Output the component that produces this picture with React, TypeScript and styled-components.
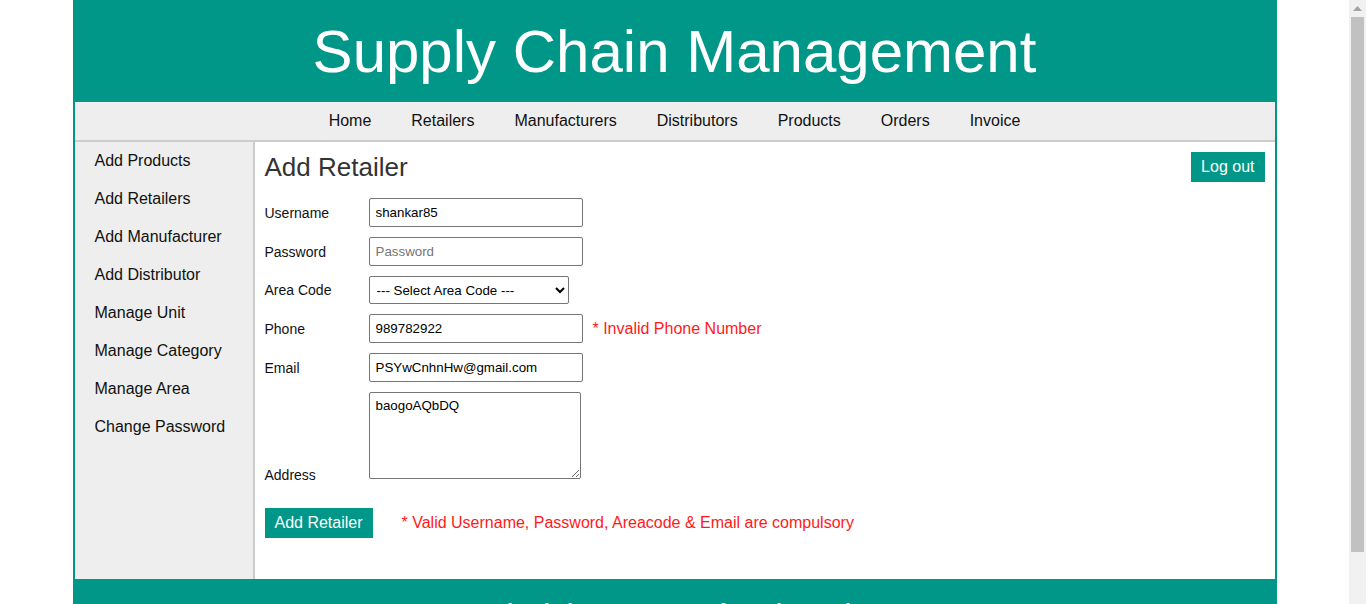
import React from "react";
import styled, { createGlobalStyle } from "styled-components";

const TEAL = "#009688";

const GlobalStyle = createGlobalStyle`
  body {
    margin: 0;
    padding-right: 17px;
    background: #fff;
    font-family: "Liberation Sans", Arial, sans-serif;
    color: #111;
  }
  * { box-sizing: border-box; }
`;

// drawn stand-in for the browser's vertical scrollbar seen in the screenshot
const ScrollTrack = styled.div`
  position: fixed;
  top: 0;
  right: 0;
  width: 17px;
  height: 100vh;
  background: #f1f1f1;
  display: flex;
  flex-direction: column;
  align-items: center;
`;

const ScrollArrow = styled.div`
  height: 17px;
  display: flex;
  align-items: center;
  justify-content: center;
`;

const ScrollThumb = styled.div`
  width: 13px;
  height: 535px;
  background: #c1c1c1;
`;

const Page = styled.div`
  width: 1204px;
  margin: 0 auto;
  border-left: 2px solid ${TEAL};
  border-right: 2px solid ${TEAL};
`;

const Header = styled.header`
  height: 102px;
  background: ${TEAL};
  display: flex;
  align-items: center;
  justify-content: center;
`;

const Title = styled.h1`
  margin: 0;
  font-size: 60px;
  font-weight: normal;
  line-height: 69px;
  color: #fff;
`;

const Nav = styled.nav`
  height: 40px;
  background: #eee;
  border-bottom: 2px solid #ccc;
  display: flex;
  align-items: center;
  justify-content: center;
`;

const NavLink = styled.a`
  padding: 0 20px;
  font-size: 16px;
  color: #111;
  text-decoration: none;
  cursor: pointer;
`;

const Body = styled.div`
  display: flex;
  height: 437px;
`;

const Sidebar = styled.aside`
  width: 180px;
  background: #eee;
  border-right: 2px solid #ccc;
  padding: 0 20px;
`;

const SideLink = styled.a`
  display: block;
  line-height: 38px;
  font-size: 16px;
  color: #111;
  text-decoration: none;
  cursor: pointer;
`;

const Main = styled.main`
  flex: 1;
  padding: 10px;
`;

const TopRow = styled.div`
  display: flex;
  align-items: center;
  justify-content: space-between;
  height: 30px;
  margin-bottom: 16px;
`;

const Heading = styled.h2`
  margin: 0;
  font-size: 26px;
  font-weight: normal;
  color: #333;
`;

const TealButton = styled.button`
  height: 30px;
  padding: 0 10px;
  background: ${TEAL};
  color: #fff;
  border: none;
  font-family: inherit;
  font-size: 16px;
  cursor: pointer;
`;

const Form = styled.form`
  display: flex;
  flex-direction: column;
  gap: 10px;
`;

const Row = styled.div<{ $bottom?: boolean }>`
  display: flex;
  align-items: ${({ $bottom }) => ($bottom ? "flex-end" : "center")};
`;

const Label = styled.label<{ $bottom?: boolean }>`
  width: 104px;
  font-size: 14px;
  color: #111;
  margin-bottom: ${({ $bottom }) => ($bottom ? "-4px" : "0")};
`;

const Input = styled.input`
  width: 214px;
  height: 29px;
  padding: 0 6px;
  border: 1px solid #767676;
  border-radius: 2px;
  font-family: inherit;
  font-size: 13.33px;
  color: #000;
  &::placeholder { color: #757575; }
`;

const Select = styled.select`
  width: 200px;
  height: 28px;
  padding: 0 3px;
  border: 1px solid #767676;
  border-radius: 2px;
  background: #fff;
  font-family: inherit;
  font-size: 13.33px;
  color: #000;
`;

const TextArea = styled.textarea`
  width: 212px;
  height: 87px;
  padding: 5px 6px;
  border: 1px solid #767676;
  border-radius: 2px;
  font-family: inherit;
  font-size: 13.33px;
  color: #000;
  resize: both;
`;

const Error = styled.span<{ $gap: number }>`
  margin-left: ${({ $gap }) => $gap}px;
  font-size: 16px;
  color: #ff1a1a;
`;

const SubmitRow = styled.div`
  display: flex;
  align-items: center;
  margin-top: 19px;
`;

const Footer = styled.footer`
  background: ${TEAL};
  padding: 21px 0 20px;
  text-align: center;
  color: #fff;
  font-weight: bold;
  font-size: 20px;
`;

const navItems = ["Home", "Retailers", "Manufacturers", "Distributors", "Products", "Orders", "Invoice"];
const sideItems = [
  "Add Products",
  "Add Retailers",
  "Add Manufacturer",
  "Add Distributor",
  "Manage Unit",
  "Manage Category",
  "Manage Area",
  "Change Password",
];

export default function App() {
  return (
    <>
      <GlobalStyle />
      <Page>
        <Header>
          <Title>Supply Chain Management</Title>
        </Header>
        <Nav>
          {navItems.map((n) => (
            <NavLink key={n}>{n}</NavLink>
          ))}
        </Nav>
        <Body>
          <Sidebar>
            {sideItems.map((s) => (
              <SideLink key={s}>{s}</SideLink>
            ))}
          </Sidebar>
          <Main>
            <TopRow>
              <Heading>Add Retailer</Heading>
              <TealButton>Log out</TealButton>
            </TopRow>
            <Form onSubmit={(e) => e.preventDefault()}>
              <Row>
                <Label>Username</Label>
                <Input defaultValue="shankar85" />
              </Row>
              <Row>
                <Label>Password</Label>
                <Input type="password" placeholder="Password" />
              </Row>
              <Row>
                <Label>Area Code</Label>
                <Select defaultValue="">
                  <option value="">--- Select Area Code ---</option>
                </Select>
              </Row>
              <Row>
                <Label>Phone</Label>
                <Input defaultValue="989782922" />
                <Error $gap={10}>* Invalid Phone Number</Error>
              </Row>
              <Row>
                <Label>Email</Label>
                <Input defaultValue="PSYwCnhnHw@gmail.com" />
              </Row>
              <Row $bottom>
                <Label $bottom>Address</Label>
                <TextArea defaultValue="baogoAQbDQ" />
              </Row>
              <SubmitRow>
                <TealButton type="submit">Add Retailer</TealButton>
                <Error $gap={29}>* Valid Username, Password, Areacode &amp; Email are compulsory</Error>
              </SubmitRow>
            </Form>
          </Main>
        </Body>
        <Footer>Supply Chain Management for Dairy products</Footer>
      </Page>
      <ScrollTrack>
        <ScrollArrow>
          <svg width="9" height="5" viewBox="0 0 9 5">
            <path d="M0 5 L4.5 0 L9 5 Z" fill="#a3a3a3" />
          </svg>
        </ScrollArrow>
        <ScrollThumb />
      </ScrollTrack>
    </>
  );
}
